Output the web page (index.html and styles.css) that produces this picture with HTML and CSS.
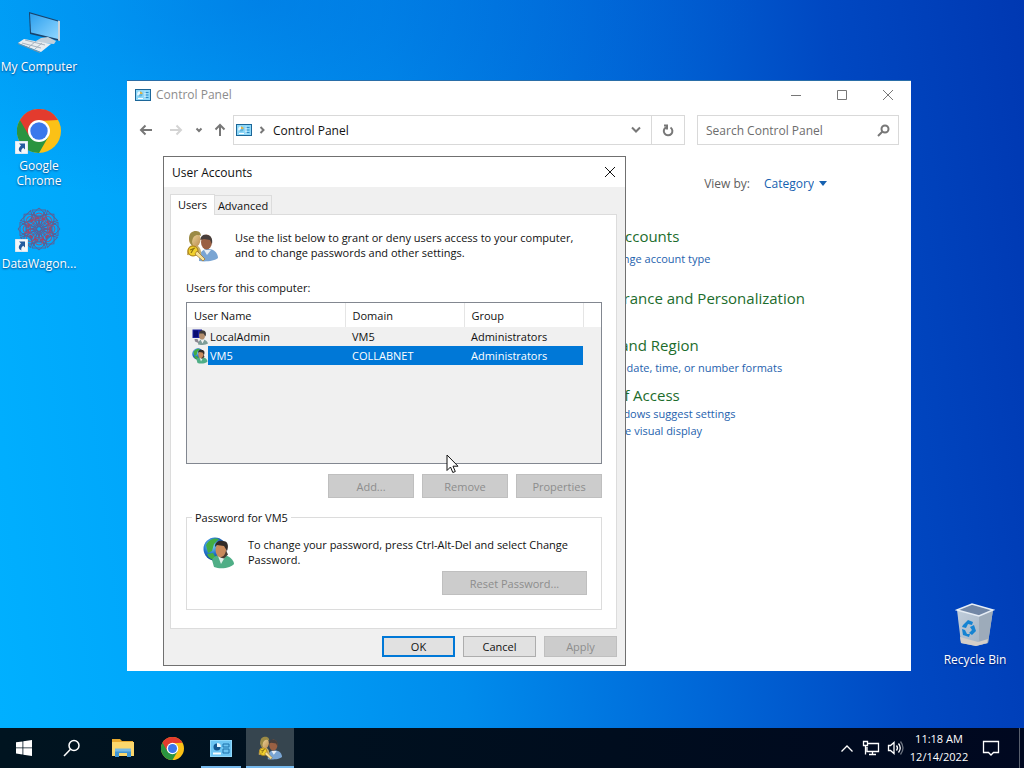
FILE: index.html
```
<!DOCTYPE html>
<html lang="en">
<head>
<meta charset="utf-8">
<meta name="viewport" content="width=device-width, initial-scale=1">
<title>User Accounts</title>
<link rel="stylesheet" href="styles.css">
</head>
<body>
<svg class="defs" width="0" height="0" aria-hidden="true">
  <defs>
    <linearGradient id="g-screen" x1="0" y1="0" x2="1" y2="1"><stop offset="0" stop-color="#2b9fee"/><stop offset="1" stop-color="#8fd6ff"/></linearGradient>
    <radialGradient id="g-globe" cx=".35" cy=".35" r=".7"><stop offset="0" stop-color="#8fe0f4"/><stop offset=".5" stop-color="#2478d0"/><stop offset="1" stop-color="#0b3a8c"/></radialGradient>
    <linearGradient id="g-skin" x1="0" y1="0" x2="1" y2="1"><stop offset="0" stop-color="#f6e3a6"/><stop offset="1" stop-color="#b98a50"/></linearGradient>
    <linearGradient id="g-bin" x1="0" y1="0" x2="1" y2="1"><stop offset="0" stop-color="#c3d0de"/><stop offset="1" stop-color="#9faebe"/></linearGradient>
    <symbol id="i-chrome" viewBox="0 0 48 48">
      <circle cx="24" cy="24" r="24" fill="#fbc116"/>
      <path d="M24 24 3.2 12A24 24 0 0 0 24 48L34.4 30Z" fill="#2a9440"/>
      <path d="M3.2 12A24 24 0 0 1 44.8 12L24 13 13.6 30Z" fill="#e33b2e"/>
      <circle cx="24" cy="24" r="12" fill="#fff"/>
      <circle cx="24" cy="24" r="9.5" fill="#3a78ec"/>
    </symbol>
    <symbol id="i-panel" viewBox="0 0 16 12">
      <rect x=".5" y=".5" width="15" height="11" fill="#8ed8f8" stroke="#1c6698"/>
      <circle cx="5" cy="5" r="2.600" fill="#5fb4dc"/>
      <path d="M5 5V2.400A2.600 2.600 0 0 1 7.600 5Z" fill="#e0b44c"/>
      <path d="M5 5V2.400A2.600 2.600 0 0 0 3 7Z" fill="#e6f8ff"/>
      <path d="M9.500 3.500h4M9.500 6h4M9.500 8.500h4" stroke="#2d8bc5"/>
      <path d="M10 2.500v7" stroke="#effaff"/>
      <path d="M3 9.500h5" stroke="#fff"/>
    </symbol>
    <symbol id="i-panel-lg" viewBox="0 0 22 17">
      <rect x=".5" y=".5" width="21" height="16" fill="#6cc4f2" stroke="#90d8fa"/>
      <circle cx="7" cy="7" r="3.500" fill="#14568f"/>
      <path d="M7 7V3A4 4 0 0 1 11 7Z" fill="#e8f7ff"/>
      <path d="M13 4h6v3h-6zM13 9h6v4h-6z" fill="none" stroke="#1f72ac"/>
      <path d="M3 13.500h8" stroke="#f5fcff" stroke-width="2"/>
    </symbol>
    <symbol id="i-users" viewBox="0 0 32 32">
      <path d="M13 31c0-8 3-12 9-12 7 0 10 5 10 9-3 3-13 4-19 3Z" fill="#7aa5d3"/>
      <path d="M18 20l3 5 4-5Z" fill="#e8eef4"/>
      <ellipse cx="20.500" cy="12" rx="5.500" ry="7.500" fill="#9a6043"/>
      <path d="M14 10c1-5 4-6 7-5 4 0 6 4 5 9l-2-4-6-1Z" fill="#473e3b"/>
      <path d="M1 25c0-7 2-10 7-10 4 0 8 3 7 11Z" fill="#c7ae6c"/>
      <ellipse cx="9" cy="9.500" rx="5.500" ry="7.500" fill="url(#g-skin)"/>
      <path d="M3 9C3 3 6 1 10 1c4 0 5 3 5 5-4-2-8-1-9 6l1 4c-3-2-4-4-4-7Z" fill="#9b8a45"/>
      <circle cx="7" cy="21" r="5" fill="#f1d12e" stroke="#a77c10"/>
      <path d="m9 24 8 7 2-2-8-8Z" fill="#f7e39a" stroke="#9c6d20" stroke-width=".7"/>
      <path d="m4 20 5-2M5 23l3-5" stroke="#8d7213" stroke-width="1.200"/>
    </symbol>
    <symbol id="i-globeuser" viewBox="0 0 32 32">
      <circle cx="12" cy="12" r="11.500" fill="url(#g-globe)"/>
      <path d="M3 8c4-7 10-7 13-6l-5 5-2 7-4 2ZM4 17l6-1 3 5-2 2c-4-1-6-3-7-6Z" fill="#43ad42"/>
      <path d="M9 23c2-4 5-5 10-5 7 0 12 5 12 9-2 3-12 6-20 3Z" fill="#4fae86"/>
      <path d="m15 19 3 8 4-7Z" fill="#e0efe9"/>
      <ellipse cx="18" cy="13" rx="5.500" ry="7.500" fill="#c98a5c"/>
      <path d="M12 10c0-6 5-7 8-6 5 0 6 5 4 10l-3-5-7-1Z" fill="#322b28"/>
      <path d="M17 20.500c4-1 5-3 6-7l2 4-4 4Z" fill="#493b32"/>
    </symbol>
    <symbol id="i-pcuser" viewBox="0 0 32 32">
      <path d="M1 1h19v17H1Z" fill="#1a209e"/><path d="M3 3h9v13H3Z" fill="#080c70"/>
      <path d="M12 31c0-6 3-10 9-10s10 4 11 8c-4 3-14 4-20 2Z" fill="#7d9c98"/>
      <path d="m17 21 4 8 4-8Z" fill="#f0f0f0"/>
      <ellipse cx="20" cy="13" rx="6" ry="8" fill="#b38e6d"/>
      <path d="M14 9c1-6 5-7 9-6 5 1 6 7 4 12l-4-6Z" fill="#3e3a3a"/>
      <path d="M5 20h6l4 9-9-4Z" fill="#8b8790"/>
    </symbol>
    <symbol id="i-shield" viewBox="0 0 16 16">
      <path d="M8 1 14 3c0 6-2 10-6 12Z" fill="#f5c62c"/><path d="M8 1 2 3c0 6 2 10 6 12Z" fill="#2474c8"/>
    </symbol>
    <symbol id="i-shortcut" viewBox="0 0 13 13">
      <path d="M0 0h13v13H0Z" fill="#f4f7fa" stroke="#9dbbd0" stroke-width=".5"/>
      <path d="M4 2.500h6v6L8.200 6.700C6 8.500 6 10 6.500 11.500 3 10 3 7 6 4.500Z" fill="#235a9e"/>
    </symbol>
    <g id="petal">
      <path d="M22 20C12 15 13 8 22 1c9 7 10 14 0 19Z"/>
      <path d="M22 20 14 7l8 3 8-3Z"/>
      <path d="M15 3h14l-3 6h-8Z"/>
      <circle cx="22" cy="10" r="4" stroke="#a05070"/>
    </g>
  </defs>
</svg>

<div class="screen">
  <main class="desktop">
    <nav class="shortcuts" aria-label="Desktop">
      <a class="shortcut" href="#computer">
        <span class="pic"><svg width="44" height="44" viewBox="0 0 44 44" aria-hidden="true">
          <path d="m12 2 31 9v20L13 24Z" fill="#19436c"/>
          <path d="m13 3.500 28 8v17.500L14 22.500Z" fill="url(#g-screen)"/>
          <path d="m41 10.500 2 .5v20l-2-.5Z" fill="#c9d3da"/>
          <path d="m24 28 7-1 8 4-2 3-14-1-4-2Z" fill="#c3d0db"/>
          <path d="m1 33 6-4 27 5-10 8Z" fill="#e9edf0"/>
          <path d="m5 33 19 5M8 30l20 5M12 37l7-6M18 39l7-6" stroke="#a7b3bf"/>
          <path d="m1 33 22 9v1L1 34Z" fill="#88929b"/>
        </svg></span>
        <span>My Computer</span>
      </a>
      <a class="shortcut" href="#chrome">
        <span class="pic"><svg width="44" height="44" aria-hidden="true"><use href="#i-chrome"/></svg>
        <svg class="badge" width="13" height="13" aria-hidden="true"><use href="#i-shortcut"/></svg></span>
        <span>Google Chrome</span>
      </a>
      <a class="shortcut" href="#datawagon">
        <span class="pic"><svg width="44" height="44" viewBox="0 0 44 44" aria-hidden="true">
          <g fill="none" stroke="#5b6096" stroke-width="1">
            <use href="#petal"/><use href="#petal" transform="rotate(45 22 22)"/><use href="#petal" transform="rotate(90 22 22)"/><use href="#petal" transform="rotate(135 22 22)"/><use href="#petal" transform="rotate(180 22 22)"/><use href="#petal" transform="rotate(225 22 22)"/><use href="#petal" transform="rotate(270 22 22)"/><use href="#petal" transform="rotate(315 22 22)"/>
            <circle cx="22" cy="22" r="11" stroke="#a14768" stroke-dasharray="4 2" stroke-width="2"/>
            <circle cx="22" cy="22" r="6" stroke="#7a5384" stroke-dasharray="2 1"/>
          </g>
        </svg>
        <svg class="badge" width="13" height="13" aria-hidden="true"><use href="#i-shortcut"/></svg></span>
        <span>DataWagon...</span>
      </a>
    </nav>

    <a class="shortcut bin" href="#bin">
      <span class="pic"><svg width="40" height="44" viewBox="0 0 40 44" aria-hidden="true">
        <path d="M2 7 17 1l21 6-5 33-12 3-15-3Z" fill="url(#g-bin)"/>
        <path d="M2 7 17 1l21 6-14 6Z" fill="#7287a6"/>
        <path d="m24 13 14-6-5 33-9 2Z" fill="#9dabba"/>
        <path d="m5 34 18 5 10-3-1 4-11 3-15-3Z" fill="#d4cec8"/>
        <path d="M2 7 17 1l21 6-14 6Z" fill="none" stroke="#e6edf5" stroke-width="1.500"/>
        <path d="m8 22 5-5 5 2-1 3-4-1-2 4-4-1ZM19 22l2 6-4 4-3-2 3-3-2-3ZM7 26l3 1 2 4 3 0-1 3-6-2Z" fill="#1583d2"/>
      </svg></span>
      <span>Recycle Bin</span>
    </a>

    <section class="window" aria-label="Control Panel">
      <header class="titlebar">
        <svg width="16" height="12" aria-hidden="true"><use href="#i-panel"/></svg>
        <span class="title">Control Panel</span>
        <button class="winbtn" aria-label="Minimize"><svg width="12" height="12" viewBox="0 0 12 12"><path d="M1 6.500h10"/></svg></button>
        <button class="winbtn" aria-label="Maximize"><svg width="12" height="12" viewBox="0 0 12 12"><path d="M1.500 1.500h9v9h-9Z"/></svg></button>
        <button class="winbtn" aria-label="Close"><svg width="12" height="12" viewBox="0 0 12 12"><path d="m1 1 10 10M11 1 1 11"/></svg></button>
      </header>
      <div class="navbar">
        <button class="nav" aria-label="Back"><svg width="14" height="12" viewBox="0 0 14 12"><path d="M13 6H2M6.500 1.500 2 6l4.500 4.500"/></svg></button>
        <button class="nav forward" aria-label="Forward" disabled><svg width="14" height="12" viewBox="0 0 14 12"><path d="M1 6h11M7.500 1.500 12 6l-4.500 4.500"/></svg></button>
        <button class="nav recent" aria-label="Recent locations"><svg width="8" height="6" viewBox="0 0 8 6"><path d="m1.500 1.500 2.500 2.500 2.500-2.500"/></svg></button>
        <button class="nav up" aria-label="Up"><svg width="12" height="14" viewBox="0 0 12 14"><path d="M6 13V2M1.500 6.500 6 2l4.500 4.500"/></svg></button>
        <div class="address">
          <svg width="16" height="12" aria-hidden="true"><use href="#i-panel"/></svg>
          <svg class="sep" width="6" height="8" viewBox="0 0 6 8" aria-hidden="true"><path d="m1.500 1 3 3-3 3"/></svg>
          <a class="crumb" href="#control-panel">Control Panel</a>
          <button class="nav drop" aria-label="Previous locations"><svg width="10" height="8" viewBox="0 0 10 8"><path d="m1 1.500 4 4 4-4"/></svg></button>
          <button class="nav refresh" aria-label="Refresh"><svg width="12" height="13" viewBox="0 0 12 13"><path d="M8.500 3.500A4.300 4.300 0 1 1 4 3.300M2 1.500h3v4"/></svg></button>
        </div>
        <div class="search">
          <input type="search" aria-label="Search Control Panel" placeholder="Search Control Panel">
          <svg width="13" height="13" viewBox="0 0 13 13" aria-hidden="true"><circle cx="8" cy="5" r="3.500"/><path d="M5.500 7.500 1 12"/></svg>
        </div>
      </div>
      <div class="content">
        <div class="viewby">
          <label for="view">View by:</label>
          <span class="pick">
            <select id="view"><option>Category</option></select>
            <svg width="8" height="5" viewBox="0 0 8 5" aria-hidden="true"><path d="M0 0h8L4 5Z"/></svg>
          </span>
        </div>
        <div class="categories">
          <section class="cat accounts"><h2><a href="#accounts">User Accounts</a></h2><a class="link" href="#type"><svg width="16" height="16" aria-hidden="true"><use href="#i-shield"/></svg>Change account type</a></section>
          <section class="cat"><h2><a href="#appearance">Appearance and Personalization</a></h2></section>
          <section class="cat region"><h2><a href="#region">Clock and Region</a></h2><a class="link" href="#formats">Change date, time, or number formats</a></section>
          <section class="cat access"><h2><a href="#access">Ease of Access</a></h2><a class="link" href="#suggest">Let Windows suggest settings</a><a class="link" href="#display">Optimize visual display</a></section>
        </div>
      </div>
    </section>

    <section class="dialog" role="dialog" aria-labelledby="dlg-title">
      <header class="dlg-title">
        <h1 id="dlg-title">User Accounts</h1>
        <button class="dlg-close" aria-label="Close"><svg width="12" height="12" viewBox="0 0 12 12"><path d="m1 1 10 10M11 1 1 11"/></svg></button>
      </header>
      <div class="dlg-body">
        <div class="tabs" role="tablist">
          <button class="tab active" role="tab" aria-selected="true">Users</button>
          <button class="tab" role="tab" aria-selected="false">Advanced</button>
        </div>
        <div class="panel" role="tabpanel">
          <div class="intro">
            <svg width="32" height="32" aria-hidden="true"><use href="#i-users"/></svg>
            <p>Use the list below to grant or deny users access to your computer,<br>and to change passwords and other settings.</p>
          </div>
          <p class="list-label" id="list-label">Users for this computer:</p>
          <div class="listbox">
            <table aria-labelledby="list-label">
              <colgroup><col class="c-name"><col class="c-domain"><col class="c-group"><col></colgroup>
              <thead><tr><th>User Name</th><th>Domain</th><th>Group</th><td></td></tr></thead>
              <tbody>
                <tr><td><span class="user"><svg width="16" height="16" aria-hidden="true"><use href="#i-pcuser"/></svg><span>LocalAdmin</span></span></td><td>VM5</td><td>Administrators</td><td></td></tr>
                <tr class="selected"><td><span class="user"><svg width="16" height="16" aria-hidden="true"><use href="#i-globeuser"/></svg><span>VM5</span></span></td><td>COLLABNET</td><td>Administrators</td><td></td></tr>
              </tbody>
            </table>
          </div>
          <div class="actions">
            <button class="btn" disabled>Add...</button>
            <button class="btn" disabled>Remove</button>
            <button class="btn" disabled>Properties</button>
          </div>
          <fieldset class="group">
            <legend>Password for VM5</legend>
            <div class="pw">
              <svg width="32" height="32" aria-hidden="true"><use href="#i-globeuser"/></svg>
              <p>To change your password, press Ctrl-Alt-Del and select Change<br>Password.</p>
            </div>
            <button class="btn reset" disabled>Reset Password...</button>
          </fieldset>
        </div>
        <footer class="dlg-foot">
          <button class="btn ok">OK</button>
          <button class="btn">Cancel</button>
          <button class="btn" disabled>Apply</button>
        </footer>
      </div>
    </section>

    <svg class="cursor" width="14" height="20" viewBox="0 0 14 20" aria-hidden="true"><path d="M1 1v15.500l3.500-3.500 2.300 5.500 2.500-1L7 12.200h5Z" fill="#fff" stroke="#111"/></svg>
  </main>

  <footer class="taskbar">
    <button class="task" aria-label="Start"><svg width="16" height="16" viewBox="0 0 16 16"><path fill="#fff" d="m0 2.300 6.500-.9v6.100H0ZM7.300 1.300 16 0v7.500H7.300ZM0 8.300h6.500v6.200L0 13.600ZM7.300 8.300H16V16l-8.700-1.300Z"/></svg></button>
    <button class="task" aria-label="Search"><svg width="18" height="18" viewBox="0 0 18 18" fill="none" stroke="#fff" stroke-width="1.500"><circle cx="11" cy="6.500" r="5"/><path d="M7.500 10.200 1 17"/></svg></button>
    <div class="pinned">
      <button class="task" aria-label="File Explorer"><svg width="22" height="18" viewBox="0 0 22 18"><path fill="#e8a92e" d="M0 0h8l2 2h11v4H0Z"/><path fill="#fbd76c" d="M0 3h22v14H0Z"/><path fill="#3f95d4" d="M3 10h16v8h-4v-4H7v4H3Z"/><path fill="#75b9e4" d="M3 9.500h16v3H3Z"/></svg></button>
      <button class="task" aria-label="Google Chrome"><svg width="23" height="23"><use href="#i-chrome"/></svg></button>
      <button class="task open" aria-label="Control Panel"><svg width="22" height="17"><use href="#i-panel-lg"/></svg></button>
      <button class="task open current" aria-label="User Accounts"><svg width="24" height="24"><use href="#i-users"/></svg></button>
    </div>
    <div class="tray">
      <button class="tray-btn" aria-label="Show hidden icons"><svg width="14" height="9" viewBox="0 0 14 9"><path d="m1.500 7.500 5.500-5.500 5.500 5.500"/></svg></button>
      <button class="tray-btn" aria-label="Network"><svg width="18" height="16" viewBox="0 0 18 16"><path d="M6 3.500h10.500v8H5V7M10.500 12v3M7 14.500h7M1.500 1.500h4v4h-4ZM3.500 6v8.500"/></svg></button>
      <button class="tray-btn" aria-label="Volume"><svg width="17" height="16" viewBox="0 0 17 16"><path d="M1.500 5.500h2l3.500-3v11l-3.500-3h-2ZM9.500 5.500q2 2.500 0 5M11.500 3.500q3.500 4.500 0 9"/><path class="dim" d="M13.500 1.500q5 6.500 0 13"/></svg></button>
      <button class="clock"><span>11:18 AM</span><span>12/14/2022</span></button>
      <button class="tray-btn notes" aria-label="Notifications"><svg width="18" height="18" viewBox="0 0 18 18"><path d="M1.500 2.500h15v11h-5L9 16l-2.500-2.500h-5Z"/></svg></button>
      <button class="peek" aria-label="Show desktop"></button>
    </div>
  </footer>
</div>
</body>
</html>
```
FILE: styles.css
```
* { box-sizing: border-box; }
body { margin: 0; font: 12px/15px "Open Sans", "Noto Sans", sans-serif; color: #111; }
h1, h2, p { margin: 0; font-size: inherit; font-weight: 400; }
a { color: inherit; text-decoration: none; }
button, input, select { font: inherit; color: inherit; border: 0; padding: 0; background: none; border-radius: 0; }
svg { display: block; flex: none; }
.defs { position: absolute; }

.screen { min-height: 100vh; display: grid; grid-template-rows: 1fr 40px; }
.desktop {
  position: relative;
  overflow: hidden;
  background:
    radial-gradient(ellipse 50% 28% at 25% 0, rgba(0, 90, 210, .35), rgba(0, 90, 210, 0)),
    linear-gradient(83deg, #00b0ff 0%, #00a5fa 18%, #008cec 42%, #0068d8 63%, #0048c2 82%, #0038b2 100%);
}

/* Desktop icons */
.shortcuts { display: flex; flex-direction: column; gap: 35px; width: 78px; padding-top: 10px; }
.shortcut { display: flex; flex-direction: column; align-items: center; gap: 5px; color: #fff; text-align: center; text-shadow: 0 1px 2px rgba(0, 0, 60, .6); }
.shortcut:nth-child(3) { margin-top: -16px; }
.pic { position: relative; }
.badge { position: absolute; left: -2px; bottom: -1px; }
.bin { position: absolute; right: 8px; bottom: 61px; width: 82px; }

/* Control Panel window */
.window { position: absolute; left: 127px; right: 113px; top: 80px; bottom: 57px; background: #fff; border-top: 1px solid #2a6ea8; }
.titlebar { display: flex; align-items: center; height: 27px; padding-left: 8px; color: #8c8c8c; }
.title { flex: 1; padding-left: 5px; }
.winbtn { display: grid; place-items: center; width: 46px; height: 27px; }
.winbtn svg, .dlg-close svg { fill: none; stroke: #777; }
.navbar { display: flex; padding: 7px 12px 0 4px; }
.nav { display: grid; place-items: center; width: 30px; height: 30px; }
.nav svg, .search svg, .sep { fill: none; stroke: #777; stroke-width: 2; }
.forward svg { stroke: #d4d4d4; }
.recent { width: 16px; }
.up { width: 26px; }
.address { flex: 1; display: flex; align-items: center; height: 30px; border: 1px solid #d9d9d9; padding-left: 2px; }
.sep { margin-left: 7px; }
.crumb { flex: 1; padding-left: 8px; }
.refresh { width: 33px; border-left: 1px solid #d9d9d9; }
.search { display: flex; align-items: center; width: 202px; height: 30px; margin-left: 12px; padding: 0 8px; border: 1px solid #d9d9d9; }
.search input { flex: 1; min-width: 0; outline: 0; }
.search input::placeholder { color: #6d6d6d; opacity: 1; }
.viewby { display: flex; justify-content: flex-end; gap: 14px; padding: 31px 84px 0 0; color: #5e5e5e; }
.pick { display: flex; align-items: center; gap: 5px; color: #1661b0; }
.pick select { appearance: none; }
.pick svg { fill: #1661b0; }
.categories { padding: 35px 0 0 452px; }
.cat { display: flex; flex-direction: column; align-items: flex-start; gap: 4px; line-height: 17px; margin-bottom: 27px; }
.cat h2 { font-size: 15px; line-height: 20px; color: #1c6c2c; }
.link { display: flex; align-items: center; gap: 2px; padding-left: 6px; font-size: 11px; color: #1e62ae; }
.accounts { margin-bottom: 21px; }
.region { margin-bottom: 9px; }
.access { gap: 0; }

/* User Accounts dialog */
.dialog { position: absolute; left: 163px; top: 156px; width: 463px; background: #f0f0f0; border: 1px solid #707070; }
.dlg-title { display: flex; align-items: center; justify-content: space-between; height: 30px; padding-left: 8px; background: #fff; }
.dlg-close { display: grid; place-items: center; width: 31px; height: 29px; }
.dlg-close svg { stroke: #111; }
.dlg-body { padding: 7px 8px 8px 6px; font-size: 11px; }
.tabs { display: flex; align-items: flex-end; }
.tab { height: 19px; width: 57px; border: 1px solid #dcdcdc; border-bottom: 0; border-left: 0; background: #f0f0f0; }
.tab.active { position: relative; width: 45px; height: 21px; margin-bottom: -1px; padding-bottom: 2px; border-left: 1px solid #dcdcdc; background: #fff; }
.panel { padding: 15px 14px 18px 15px; background: #fff; border: 1px solid #dcdcdc; }
.intro { display: flex; gap: 17px; }
.intro p { white-space: nowrap; }
.list-label { padding: 18px 0 7px; }
.listbox { height: 162px; border: 1px solid #828790; background: #f0f0f0; }
table { width: 100%; table-layout: fixed; border-collapse: collapse; }
.c-name { width: 158px; }
.c-domain, .c-group { width: 119px; }
thead { background: #fff; }
thead tr { height: 24px; }
th { padding: 0 7px; text-align: left; font-weight: 400; border-right: 1px solid #e5e5e5; }
td { padding: 0 7px; }
tbody tr { height: 19px; }
.user { display: flex; align-items: center; height: 19px; margin: 0 -7px; padding-left: 5px; }
.user span { flex: 1; height: 19px; padding-left: 2px; line-height: 19px; }
.selected td:not(:last-child):not(:first-child), .selected .user span { background: #0078d7; color: #fff; }
.actions { display: flex; justify-content: flex-end; gap: 8px; padding-top: 10px; }
.btn { width: 73px; height: 21px; border: 1px solid #adadad; background: #e1e1e1; }
.btn:disabled { border-color: #bfbfbf; background: #ccc; color: #8d8d8d; }
.ok { border: 2px solid #0078d7; }
.actions .btn, .reset { width: 86px; height: 24px; }
.group { margin: 12px 0 0; padding: 12px 14px 14px 16px; border: 1px solid #dcdcdc; min-width: 0; }
.group legend { margin-left: -11px; padding: 0 3px; }
.pw { display: flex; gap: 13px; }
.pw p { white-space: nowrap; }
.reset { display: block; width: 145px; margin: 2px 0 0 auto; }
.dlg-foot { display: flex; justify-content: flex-end; gap: 8px; padding-top: 7px; }

.cursor { position: absolute; left: 446px; top: 454px; }

/* Taskbar */
.taskbar { display: flex; background: linear-gradient(90deg, #001420, #000d1e 60%, #000820); color: #fff; }
.task { display: grid; place-items: center; width: 48px; height: 40px; position: relative; }
.pinned { display: flex; gap: 1px; margin-left: 3px; }
.open::after { content: ""; position: absolute; left: 4px; right: 4px; bottom: 0; height: 2px; background: #76b9ed; }
.current { background: #36454f; }
.current::after { left: 0; right: 0; }
.tray { display: flex; margin-left: auto; }
.tray-btn { display: grid; place-items: center; width: 24px; }
.tray-btn svg { fill: none; stroke: #fff; stroke-width: 1.3; }
.tray-btn .dim { stroke: #6d7480; }
.notes { width: 40px; }
.clock { display: flex; flex-direction: column; align-items: center; justify-content: center; width: 64px; font-size: 11px; line-height: 18px; }
.peek { width: 5px; margin-left: 8px; border-left: 1px solid #59606e; }
```
